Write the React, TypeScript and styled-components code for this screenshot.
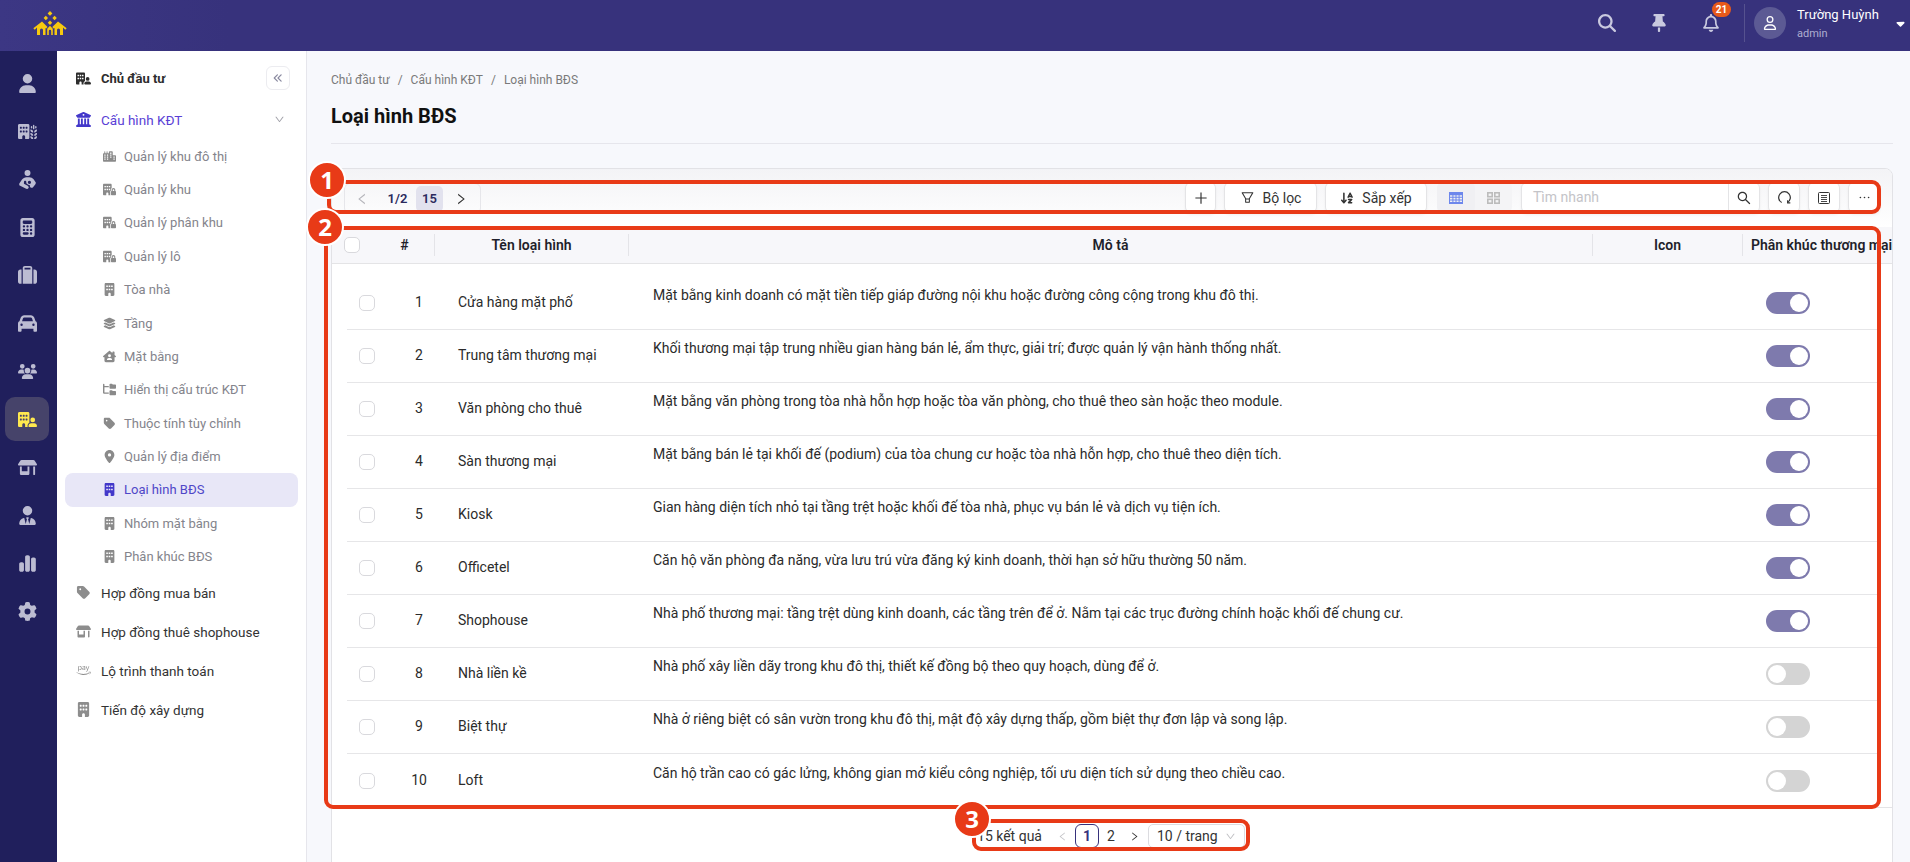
import React from "react";
import styled, { createGlobalStyle } from "styled-components";
import {
  FaAmazonPay,
  FaAnglesLeft,
  FaArrowDownAZ,
  FaBuilding,
  FaBuildingColumns,
  FaBuildingLock,
  FaBuildingUser,
  FaBuildingWheat,
  FaCalculator,
  FaCar,
  FaCaretDown,
  FaChartSimple,
  FaCity,
  FaFolderTree,
  FaGear,
  FaHouseChimneyUser,
  FaLayerGroup,
  FaLocationDot,
  FaMagnifyingGlass,
  FaPersonBreastfeeding,
  FaRegBell,
  FaRegUser,
  FaShop,
  FaSuitcase,
  FaTag,
  FaThumbtack,
  FaUser,
  FaUsers,
  FaUserTie,
} from "react-icons/fa6";
import {
  AiOutlineDown,
  AiOutlineEllipsis,
  AiOutlineFilter,
  AiOutlineLeft,
  AiOutlinePlus,
  AiOutlineRight,
  AiOutlineSearch,
} from "react-icons/ai";

const GlobalStyle = createGlobalStyle`
  html, body {
    margin: 0;
    padding: 0;
    height: 100%;
    overflow: hidden;
    background: #f7f8fc;
    font-family: Roboto, "Noto Sans", sans-serif;
    color: #2b2b2b;
  }
  * { box-sizing: border-box; }
`;

const Page = styled.div`
  position: relative;
  width: 1910px;
  height: 862px;
  overflow: hidden;
  display: flex;
  flex-direction: column;
`;

/* ---------- top bar ---------- */
const TopBar = styled.header`
  height: 51px;
  flex: none;
  display: flex;
  align-items: center;
  padding: 0 0 5px 33px;
  background: linear-gradient(90deg, #3c3784 0%, #37327c 12%, #37327c 100%);
`;
const TopActions = styled.div`
  margin-left: auto;
  display: flex;
  align-items: center;
`;
const TopIcon = styled.div`
  position: relative;
  width: 52px;
  display: flex;
  justify-content: center;
  color: #c9c9df;
  font-size: 18px;
`;
const Badge = styled.span`
  position: absolute;
  top: -12px;
  left: 27px;
  min-width: 19px;
  height: 15px;
  border-radius: 8px;
  background: #e8591a;
  color: #fff;
  font-size: 10px;
  font-weight: 700;
  line-height: 15px;
  text-align: center;
`;
const UserBox = styled.div`
  height: 38px;
  width: 166px;
  margin-left: 7px;
  padding-left: 9px;
  border-left: 1px solid #56528f;
  display: flex;
  align-items: center;
  color: #fff;
`;
const Avatar = styled.div`
  width: 32px;
  height: 32px;
  border-radius: 50%;
  background: #5c5a94;
  display: flex;
  align-items: center;
  justify-content: center;
  font-size: 14px;
`;
const UserText = styled.div`
  margin-left: 11px;
  display: flex;
  flex-direction: column;
  gap: 6px;
`;
const UserName = styled.span`
  font-size: 13px;
  line-height: 15px;
`;
const UserRole = styled.span`
  font-size: 11px;
  line-height: 12px;
  color: #aeaed0;
`;
const Caret = styled.div`
  margin-left: 15px;
  font-size: 13px;
  display: flex;
`;

/* ---------- body ---------- */
const Body = styled.div`
  flex: 1;
  display: flex;
  min-height: 0;
`;
const Rail = styled.nav`
  width: 57px;
  flex: none;
  padding: 10px 6px 0 5px;
  display: flex;
  flex-direction: column;
  gap: 4px;
  background: #201f5c;
`;
const RailItem = styled.div<{ $active?: boolean }>`
  width: 44px;
  height: 44px;
  border-radius: 10px;
  display: flex;
  align-items: center;
  justify-content: center;
  font-size: 19px;
  color: ${(p) => (p.$active ? "#ffe94f" : "#bcbcd2")};
  background: ${(p) => (p.$active ? "#46436a" : "transparent")};
`;

const Sidebar = styled.aside`
  width: 250px;
  flex: none;
  padding-top: 12px;
  background: #fff;
  border-right: 1px solid #e6e6ec;
`;
const SideHead = styled.div`
  height: 30px;
  padding: 0 16px 0 17px;
  display: flex;
  align-items: center;
`;
const SideIcon = styled.span<{ $color?: string }>`
  width: 18px;
  flex: none;
  display: flex;
  justify-content: center;
  font-size: 15px;
  color: ${(p) => p.$color || "#8d8d8d"};
`;
const SideHeadLabel = styled.span`
  margin-left: 9px;
  font-size: 13px;
  font-weight: 700;
  color: #2d2d2d;
`;
const CollapseBtn = styled.button`
  margin-left: auto;
  width: 24px;
  height: 24px;
  padding: 0;
  border: 1px solid #ececf0;
  border-radius: 6px;
  background: #fff;
  color: #8a8aa0;
  font-size: 10px;
  display: flex;
  align-items: center;
  justify-content: center;
`;
const GroupRow = styled.div`
  height: 33px;
  margin: 10px 0 3.4px;
  padding: 0 21px 0 17px;
  display: flex;
  align-items: center;
`;
const GroupLabel = styled.span`
  margin-left: 9px;
  font-size: 13.5px;
  color: #5a3fd6;
`;
const GroupChevron = styled.span`
  margin-left: auto;
  font-size: 11px;
  color: #a0a0a8;
  display: flex;
`;
const SubItem = styled.div<{ $active?: boolean }>`
  height: 33.4px;
  margin: 0 8px;
  padding-left: 35px;
  display: flex;
  align-items: center;
  gap: 6px;
  border-radius: 8px;
  font-size: 13px;
  color: ${(p) => (p.$active ? "#4f46c8" : "#84848c")};
  background: ${(p) => (p.$active ? "#e8e7f7" : "transparent")};
`;
const SubIcon = styled.span<{ $active?: boolean }>`
  width: 18px;
  flex: none;
  display: flex;
  justify-content: center;
  font-size: 13px;
  color: ${(p) => (p.$active ? "#4338ca" : "#8a8a8a")};
`;
const RootItem = styled.div`
  height: 39px;
  padding-left: 17px;
  display: flex;
  align-items: center;
  gap: 9px;
  font-size: 13.5px;
  color: #333;
`;

/* ---------- main ---------- */
const Main = styled.main`
  flex: 1;
  min-width: 0;
  padding: 22px 17px 0 24px;
  overflow: hidden;
`;
const Breadcrumb = styled.div`
  height: 14px;
  display: flex;
  gap: 8px;
  font-size: 12px;
  line-height: 14px;
  color: #7a7a7a;
`;
const Title = styled.h1`
  margin: 17px 0 0;
  padding-bottom: 15px;
  border-bottom: 1px solid #e6e6ec;
  font-size: 20px;
  line-height: 24px;
  font-weight: 700;
  color: #111;
`;
const Card = styled.section`
  margin-top: 24px;
  height: 720px;
  border: 1px solid #e2e2e6;
  border-radius: 8px 8px 0 0;
  background: #fff;
  overflow: hidden;
`;
const Toolbar = styled.div`
  height: 58px;
  padding: 13px 12px 0;
  display: flex;
  gap: 8px;
  background: linear-gradient(180deg, #f3f3f6 0%, #fafafb 60%, #fff 100%);
`;
const Pager = styled.div`
  width: 137px;
  height: 31px;
  margin: 1px auto 0 0;
  display: flex;
  align-items: center;
  border: 1px solid #e6e6ea;
  border-radius: 6px;
  color: #2b2a5e;
  font-size: 13px;
  font-weight: 600;
`;
const PagerArrow = styled.span<{ $off?: boolean }>`
  width: ${(p) => (p.$off ? "34px" : "36px")};
  display: flex;
  justify-content: center;
  font-size: 14px;
  color: ${(p) => (p.$off ? "#b5b5bb" : "#333")};
`;
const PagerNum = styled.span`
  width: 37px;
  text-align: center;
`;
const Chip = styled.span`
  width: 27px;
  height: 26px;
  border-radius: 5px;
  background: #e2e2ee;
  text-align: center;
  line-height: 26px;
`;
const ToolButton = styled.div<{ $w: number }>`
  width: ${(p) => p.$w}px;
  height: 31px;
  display: flex;
  align-items: center;
  justify-content: center;
  gap: 8px;
  border: 1px solid #e4e4e6;
  border-top-color: #efeff1;
  border-radius: 6px;
  background: #fff;
  box-shadow: 0 2px 3px rgba(0, 0, 0, 0.05);
  font-size: 14px;
  color: #333;
`;
const ViewSwitch = styled.div`
  width: 75px;
  height: 31px;
  margin: 0 1px 0 2px;
  display: flex;
  border-radius: 6px;
  background: #f4f4f6;
`;
const ViewOption = styled.div<{ $active?: boolean }>`
  flex: 1;
  display: flex;
  align-items: center;
  justify-content: center;
  border-radius: 6px;
  color: ${(p) => (p.$active ? "#6d87ec" : "#bcbcbc")};
  background: ${(p) => (p.$active ? "#f0f0f3" : "transparent")};
`;
const SearchBox = styled.div`
  width: 239px;
  height: 31px;
  display: flex;
  border: 1px solid #e4e4e6;
  border-radius: 6px;
  background: #fff;
  box-shadow: 0 2px 3px rgba(0, 0, 0, 0.05);
`;
const SearchInput = styled.div`
  flex: 1;
  padding-left: 11px;
  font-size: 14px;
  line-height: 29px;
  color: #c4c4c8;
`;
const SearchBtn = styled.div`
  width: 31px;
  border-left: 1px solid #e4e4e6;
  display: flex;
  align-items: center;
  justify-content: center;
  font-size: 16px;
  color: #333;
`;

const HeadRow = styled.div`
  height: 37px;
  display: grid;
  grid-template-columns: 43px 60px 194px 964px 149px 150px;
  align-items: center;
  background: #f7f7fa;
  border-bottom: 1px solid #e4e4e6;
`;
const HeadCell = styled.div<{ $sep?: boolean }>`
  height: 22px;
  padding-top: 1px;
  overflow: visible;
  white-space: nowrap;
  text-align: center;
  font-size: 14px;
  font-weight: 600;
  line-height: 20px;
  color: #1f1f2b;
  border-right: ${(p) => (p.$sep ? "1px solid #e4e4e8" : "0")};
`;
const LastHeadCell = styled(HeadCell)`
  padding-left: 8px;
  text-align: left;
  border-left: 1px solid #e4e4e8;
`;
const HeadCheckCell = styled.div`
  padding-left: 12px;
  display: flex;
`;
const CheckBox = styled.span`
  width: 16px;
  height: 16px;
  display: block;
  border: 1px solid #d9d9dd;
  border-radius: 5px;
  background: #fff;
`;
const Rows = styled.div`
  padding: 13px 15px 0;
  border-bottom: 1px solid #e4e4e6;
`;
const Row = styled.div`
  height: 53px;
  display: grid;
  grid-template-columns: 40px 64px 202px 1113px 111px;
  align-items: center;
  border-bottom: 1px solid #e6e6e8;
  font-size: 14px;
  color: #2b2b2b;
  &:last-child {
    border-bottom: 0;
  }
`;
const RowCheck = styled.div`
  display: flex;
  justify-content: center;
`;
const RowNum = styled.div`
  padding-bottom: 2px;
  text-align: center;
`;
const RowName = styled.div`
  padding: 0 0 2px 7px;
`;
const RowDesc = styled.div`
  padding-bottom: 16px;
  white-space: nowrap;
`;
const Toggle = styled.span<{ $on: boolean }>`
  position: relative;
  display: block;
  width: 44px;
  height: 22px;
  border-radius: 11px;
  background: ${(p) => (p.$on ? "#7e7aad" : "#d4d4d4")};
  &::after {
    content: "";
    position: absolute;
    top: 2px;
    left: ${(p) => (p.$on ? "24px" : "2px")};
    width: 18px;
    height: 18px;
    border-radius: 50%;
    background: #fff;
  }
`;
const Pagination = styled.div`
  height: 24px;
  margin-top: 16px;
  padding-right: 2px;
  display: flex;
  justify-content: center;
  align-items: center;
  font-size: 14px;
  color: #333;
`;
const ResultCount = styled.span`
  margin-right: 9px;
`;
const PageCell = styled.span<{ $active?: boolean; $off?: boolean }>`
  width: 24px;
  height: 24px;
  display: flex;
  align-items: center;
  justify-content: center;
  border-radius: 6px;
  font-size: 14px;
  font-weight: ${(p) => (p.$active ? 700 : 400)};
  color: ${(p) => (p.$active ? "#37327c" : p.$off ? "#c4c4c8" : "#333")};
  border: ${(p) => (p.$active ? "1px solid #37327c" : "0")};
`;
const PageSelect = styled.div`
  width: 97px;
  height: 24px;
  margin-left: 1px;
  padding: 0 8px;
  display: flex;
  align-items: center;
  justify-content: space-between;
  border: 1px solid #dcdce0;
  border-radius: 5px;
`;
const SelectArrow = styled.span`
  display: flex;
  font-size: 11px;
  color: #c0c0c4;
`;

/* ---------- annotation overlay ---------- */
const Mark = styled.div<{ $l: number; $t: number; $w: number; $h: number }>`
  position: absolute;
  left: ${(p) => p.$l}px;
  top: ${(p) => p.$t}px;
  width: ${(p) => p.$w}px;
  height: ${(p) => p.$h}px;
  border: 4px solid #e83a17;
  border-radius: 9px;
  pointer-events: none;
`;
const MarkNum = styled.div<{ $x: number; $y: number }>`
  position: absolute;
  left: ${(p) => p.$x - 19}px;
  top: ${(p) => p.$y - 19}px;
  width: 38px;
  height: 38px;
  border-radius: 50%;
  border: 2px solid #fff;
  background: #e83a17;
  color: #fff;
  font-family: "Open Sans", Roboto, sans-serif;
  font-size: 24px;
  font-weight: 700;
  line-height: 33px;
  text-align: center;
`;

const Logo = () => (
  <svg width="34" height="24" viewBox="0 0 34 24" fill="#f7c90f">
    <path d="M17 0l2.4 2.4L17 4.8l-2.4-2.4z" />
    <path d="M12.8 4.8L15 7l-2.2 2.2L10.6 7zM21.6 4.8L23.8 7l-2.2 2.2L19.4 7z" />
    <path d="M17 9.6l2.2 2.2-2.2 2.2-2.2-2.2z" />
    <path d="M9 10.5l5.5 5.6-1.4 1.4-.6-.5V24H10v-5a1.5 1.5 0 0 0-3 0v5H4v-7.4l-2.2 2.1L.3 17.2z" />
    <path d="M25 10.5l8.7 6.7-1.5 1.5-2.2-2.1V24h-3v-5a1.5 1.5 0 0 0-3 0v5h-2.5v-6.9l-.9.4-1.3-1.4z" />
    <path d="M17 14.8l2.8 2.9V24h-1.6v-4a1.2 1.2 0 0 0-2.4 0v4h-1.6v-6.3z" />
  </svg>
);

const ReloadIcon = () => (
  <svg width="15" height="15" viewBox="0 0 16 16" fill="none" stroke="#333" strokeWidth="1.3">
    <path d="M5 13.4A6.2 6.2 0 1 1 11 13.4" />
    <path d="M11.4 10.8v2.9h2.8" />
  </svg>
);

const PanelIcon = () => (
  <svg width="14" height="14" viewBox="0 0 14 14" fill="none" stroke="#333">
    <rect x="1.5" y="1.5" width="11" height="11" rx="1" />
    <path d="M4 4.5h6M4 6.5h6M4 8.5h6M4 10.5h6" strokeWidth="0.9" />
  </svg>
);

const TableViewIcon = () => (
  <svg width="14" height="12" viewBox="0 0 14 12" fill="currentColor">
    <path d="M0 0h14v12H0zM1 3.2v1.6h2.4V3.2zm3.4 0v1.6h2.1V3.2zm3.1 0v1.6h2.1V3.2zm3.1 0v1.6H13V3.2zM1 5.8v1.6h2.4V5.8zm3.4 0v1.6h2.1V5.8zm3.1 0v1.6h2.1V5.8zm3.1 0v1.6H13V5.8zM1 8.4V10h2.4V8.4zm3.4 0V10h2.1V8.4zm3.1 0V10h2.1V8.4zm3.1 0V10H13V8.4z" fillRule="evenodd" />
  </svg>
);

const GridViewIcon = () => (
  <svg width="13" height="12" viewBox="0 0 13 12" fill="none" stroke="currentColor" strokeWidth="1.6">
    <rect x="0.8" y="0.8" width="4.4" height="3.9" />
    <rect x="7.8" y="0.8" width="4.4" height="3.9" />
    <rect x="0.8" y="7.3" width="4.4" height="3.9" />
    <rect x="7.8" y="7.3" width="4.4" height="3.9" />
  </svg>
);

const railIcons = [
  <FaUser key="a" />,
  <FaBuildingWheat key="b" />,
  <FaPersonBreastfeeding key="c" />,
  <FaCalculator key="d" />,
  <FaSuitcase key="e" />,
  <FaCar key="f" />,
  <FaUsers key="g" />,
  <FaBuildingUser key="h" />,
  <FaShop key="i" />,
  <FaUserTie key="j" />,
  <FaChartSimple key="k" />,
  <FaGear key="l" />,
];

const subItems = [
  { label: "Quản lý khu đô thị", icon: <FaCity /> },
  { label: "Quản lý khu", icon: <FaBuildingLock /> },
  { label: "Quản lý phân khu", icon: <FaBuildingLock /> },
  { label: "Quản lý lô", icon: <FaBuildingLock /> },
  { label: "Tòa nhà", icon: <FaBuilding /> },
  { label: "Tầng", icon: <FaLayerGroup /> },
  { label: "Mặt bằng", icon: <FaHouseChimneyUser /> },
  { label: "Hiển thị cấu trúc KĐT", icon: <FaFolderTree /> },
  { label: "Thuộc tính tùy chỉnh", icon: <FaTag /> },
  { label: "Quản lý địa điểm", icon: <FaLocationDot /> },
  { label: "Loại hình BĐS", icon: <FaBuilding />, active: true },
  { label: "Nhóm mặt bằng", icon: <FaBuilding /> },
  { label: "Phân khúc BĐS", icon: <FaBuilding /> },
];

const rootItems = [
  { label: "Hợp đồng mua bán", icon: <FaTag /> },
  { label: "Hợp đồng thuê shophouse", icon: <FaShop /> },
  { label: "Lộ trình thanh toán", icon: <FaAmazonPay /> },
  { label: "Tiến độ xây dựng", icon: <FaBuilding /> },
];

const rows = [
  ["Cửa hàng mặt phố", "Mặt bằng kinh doanh có mặt tiền tiếp giáp đường nội khu hoặc đường công cộng trong khu đô thị.", true],
  ["Trung tâm thương mại", "Khối thương mại tập trung nhiều gian hàng bán lẻ, ẩm thực, giải trí; được quản lý vận hành thống nhất.", true],
  ["Văn phòng cho thuê", "Mặt bằng văn phòng trong tòa nhà hỗn hợp hoặc tòa văn phòng, cho thuê theo sàn hoặc theo module.", true],
  ["Sàn thương mại", "Mặt bằng bán lẻ tại khối đế (podium) của tòa chung cư hoặc tòa nhà hỗn hợp, cho thuê theo diện tích.", true],
  ["Kiosk", "Gian hàng diện tích nhỏ tại tầng trệt hoặc khối đế tòa nhà, phục vụ bán lẻ và dịch vụ tiện ích.", true],
  ["Officetel", "Căn hộ văn phòng đa năng, vừa lưu trú vừa đăng ký kinh doanh, thời hạn sở hữu thường 50 năm.", true],
  ["Shophouse", "Nhà phố thương mại: tầng trệt dùng kinh doanh, các tầng trên để ở. Nằm tại các trục đường chính hoặc khối đế chung cư.", true],
  ["Nhà liền kề", "Nhà phố xây liền dãy trong khu đô thị, thiết kế đồng bộ theo quy hoạch, dùng để ở.", false],
  ["Biệt thự", "Nhà ở riêng biệt có sân vườn trong khu đô thị, mật độ xây dựng thấp, gồm biệt thự đơn lập và song lập.", false],
  ["Loft", "Căn hộ trần cao có gác lửng, không gian mở kiểu công nghiệp, tối ưu diện tích sử dụng theo chiều cao.", false],
] as const;

const App: React.FC = () => (
  <Page>
    <GlobalStyle />
    <TopBar>
      <Logo />
      <TopActions>
        <TopIcon>
          <FaMagnifyingGlass />
        </TopIcon>
        <TopIcon>
          <FaThumbtack />
        </TopIcon>
        <TopIcon>
          <FaRegBell />
          <Badge>21</Badge>
        </TopIcon>
        <UserBox>
          <Avatar>
            <FaRegUser />
          </Avatar>
          <UserText>
            <UserName>Trường Huỳnh</UserName>
            <UserRole>admin</UserRole>
          </UserText>
          <Caret>
            <FaCaretDown />
          </Caret>
        </UserBox>
      </TopActions>
    </TopBar>
    <Body>
      <Rail>
        {railIcons.map((icon, i) => (
          <RailItem key={i} $active={i === 7}>
            {icon}
          </RailItem>
        ))}
      </Rail>
      <Sidebar>
        <SideHead>
          <SideIcon $color="#2d2d2d">
            <FaBuildingUser />
          </SideIcon>
          <SideHeadLabel>Chủ đầu tư</SideHeadLabel>
          <CollapseBtn>
            <FaAnglesLeft />
          </CollapseBtn>
        </SideHead>
        <GroupRow>
          <SideIcon $color="#4338ca">
            <FaBuildingColumns />
          </SideIcon>
          <GroupLabel>Cấu hình KĐT</GroupLabel>
          <GroupChevron>
            <AiOutlineDown />
          </GroupChevron>
        </GroupRow>
        {subItems.map((item) => (
          <SubItem key={item.label} $active={item.active}>
            <SubIcon $active={item.active}>{item.icon}</SubIcon>
            {item.label}
          </SubItem>
        ))}
        {rootItems.map((item) => (
          <RootItem key={item.label}>
            <SideIcon>{item.icon}</SideIcon>
            {item.label}
          </RootItem>
        ))}
      </Sidebar>
      <Main>
        <Breadcrumb>
          <span>Chủ đầu tư</span>
          <span>/</span>
          <span>Cấu hình KĐT</span>
          <span>/</span>
          <span>Loại hình BĐS</span>
        </Breadcrumb>
        <Title>Loại hình BĐS</Title>
        <Card>
          <Toolbar>
            <Pager>
              <PagerArrow $off>
                <AiOutlineLeft />
              </PagerArrow>
              <PagerNum>1/2</PagerNum>
              <Chip>15</Chip>
              <PagerArrow>
                <AiOutlineRight />
              </PagerArrow>
            </Pager>
            <ToolButton $w={31}>
              <AiOutlinePlus size={16} />
            </ToolButton>
            <ToolButton $w={93}>
              <AiOutlineFilter size={15} />
              Bộ lọc
            </ToolButton>
            <ToolButton $w={102}>
              <FaArrowDownAZ size={14} />
              Sắp xếp
            </ToolButton>
            <ViewSwitch>
              <ViewOption $active>
                <TableViewIcon />
              </ViewOption>
              <ViewOption>
                <GridViewIcon />
              </ViewOption>
            </ViewSwitch>
            <SearchBox>
              <SearchInput>Tìm nhanh</SearchInput>
              <SearchBtn>
                <AiOutlineSearch />
              </SearchBtn>
            </SearchBox>
            <ToolButton $w={32}>
              <ReloadIcon />
            </ToolButton>
            <ToolButton $w={32}>
              <PanelIcon />
            </ToolButton>
            <ToolButton $w={32}>
              <AiOutlineEllipsis size={15} />
            </ToolButton>
          </Toolbar>
          <HeadRow>
            <HeadCheckCell>
              <CheckBox />
            </HeadCheckCell>
            <HeadCell $sep>#</HeadCell>
            <HeadCell $sep>Tên loại hình</HeadCell>
            <HeadCell $sep>Mô tả</HeadCell>
            <HeadCell>Icon</HeadCell>
            <LastHeadCell>Phân khúc thương mại</LastHeadCell>
          </HeadRow>
          <Rows>
            {rows.map(([name, desc, on], i) => (
              <Row key={name}>
                <RowCheck>
                  <CheckBox />
                </RowCheck>
                <RowNum>{i + 1}</RowNum>
                <RowName>{name}</RowName>
                <RowDesc>{desc}</RowDesc>
                <Toggle $on={on} />
              </Row>
            ))}
          </Rows>
          <Pagination>
            <ResultCount>15 kết quả</ResultCount>
            <PageCell $off>
              <AiOutlineLeft size={11} />
            </PageCell>
            <PageCell $active>1</PageCell>
            <PageCell>2</PageCell>
            <PageCell>
              <AiOutlineRight size={11} />
            </PageCell>
            <PageSelect>
              10 / trang
              <SelectArrow>
                <AiOutlineDown />
              </SelectArrow>
            </PageSelect>
          </Pagination>
        </Card>
      </Main>
    </Body>
    <Mark $l={327} $t={180} $w={1554} $h={34} />
    <Mark $l={324} $t={226} $w={1557} $h={583} />
    <Mark $l={972} $t={819} $w={278} $h={32} />
    <MarkNum $x={327} $y={180}>1</MarkNum>
    <MarkNum $x={325} $y={227}>2</MarkNum>
    <MarkNum $x={972} $y={819}>3</MarkNum>
  </Page>
);

export default App;
